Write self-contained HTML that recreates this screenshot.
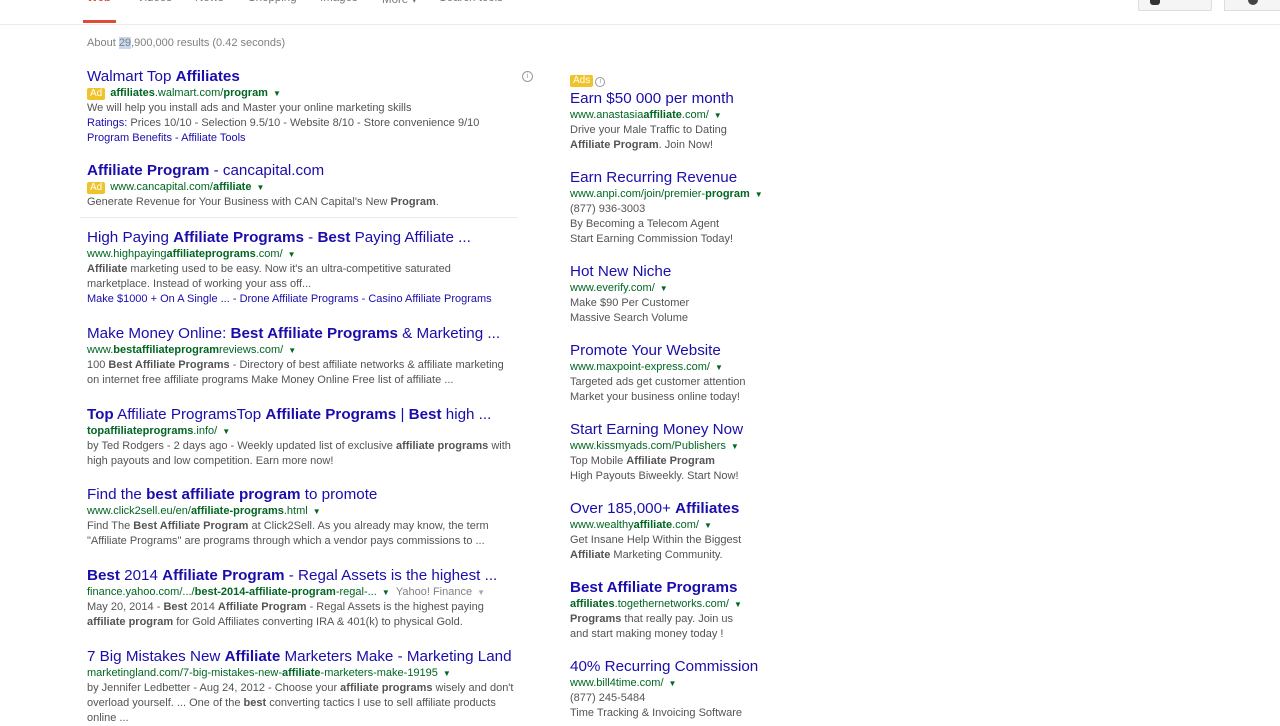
<!DOCTYPE html>
<html><head><meta charset="utf-8"><style>
body{margin:0;width:1280px;height:720px;overflow:hidden;background:#fff;font-family:"Liberation Sans",Arial,sans-serif;position:relative}
.a{position:absolute;white-space:nowrap}
.t{font-size:15.2px;color:#1a0dab;line-height:18px}
.u{font-size:11px;color:#006621;line-height:15px}
.s{font-size:11px;color:#545454;line-height:15px}
.l{color:#1a0dab}
.ad{display:inline-block;background:#f0c32a;color:#fff;font-size:10px;line-height:12px;padding:0 3px;border-radius:2px;margin-right:5px}
.ar{font-size:8px;color:#006621;margin-left:5px}
b{font-weight:bold}
.tab{position:absolute;top:-8px;font-size:11.5px;color:#777}
</style></head><body>
<div class="tab" style="left:87px;color:#dd4b39;font-weight:bold">Web</div>
<div class="tab" style="left:137px">Videos</div>
<div class="tab" style="left:195px">News</div>
<div class="tab" style="left:248px">Shopping</div>
<div class="tab" style="left:320px">Images</div>
<div class="tab" style="left:382px">More ▾</div>
<div class="tab" style="left:439px">Search tools</div>
<div class="a" style="left:83px;top:20px;width:33px;height:3px;background:#dd4b39"></div>
<div class="a" style="left:0;top:24px;width:1280px;height:1px;background:#ebebeb"></div>
<div class="a" style="left:1138px;top:0;width:72px;height:10px;border:1px solid #ddd;border-top:0;background:#f5f5f5;border-radius:0 0 2px 2px"></div>
<div class="a" style="left:1150px;top:0;width:10px;height:5px;background:#333;border-radius:0 0 3px 3px"></div>
<div class="a" style="left:1224px;top:0;width:60px;height:10px;border:1px solid #ddd;border-top:0;background:#f5f5f5"></div>
<div class="a" style="left:1248px;top:0;width:10px;height:5px;background:#444;border-radius:0 0 5px 5px"></div>

<div class="a s" style="left:87px;top:36px;color:#808080">About <span style="background:#c7d9f0">29</span>,900,000 results (0.42 seconds)</div>

<div class="a" style="left:87px;top:68px">
<div class="t">Walmart Top <b>Affiliates</b></div>
<div class="u"><span class="ad">Ad</span><b>affiliates</b>.walmart.com/<b>program</b><span class="ar">▼</span></div>
<div class="s">We will help you install ads and Master your online marketing skills</div>
<div class="s"><span class="l">Ratings:</span> Prices 10/10 - Selection 9.5/10 - Website 8/10 - Store convenience 9/10</div>
<div class="s l">Program Benefits - Affiliate Tools</div></div>
<div class="a" style="left:522px;top:71px;width:9px;height:9px;border:1px solid #999;border-radius:50%;font-size:7px;color:#999;text-align:center;line-height:9px">i</div>

<div class="a" style="left:87px;top:162px">
<div class="t"><b>Affiliate Program</b> - cancapital.com</div>
<div class="u"><span class="ad">Ad</span>www.cancapital.com/<b>affiliate</b><span class="ar">▼</span></div>
<div class="s">Generate Revenue for Your Business with CAN Capital's New <b>Program</b>.</div></div>
<div class="a" style="left:80px;top:217px;width:438px;height:1px;background:#ebebeb"></div>

<div class="a" style="left:87px;top:229px">
<div class="t">High Paying <b>Affiliate Programs</b> - <b>Best</b> Paying Affiliate ...</div>
<div class="u">www.highpaying<b>affiliateprograms</b>.com/<span class="ar">▼</span></div>
<div class="s"><b>Affiliate</b> marketing used to be easy. Now it's an ultra-competitive saturated</div>
<div class="s">marketplace. Instead of working your ass off...</div>
<div class="s l">Make $1000 + On A Single ... - Drone Affiliate Programs - Casino Affiliate Programs</div></div>

<div class="a" style="left:87px;top:325px">
<div class="t">Make Money Online: <b>Best Affiliate Programs</b> &amp; Marketing ...</div>
<div class="u">www.<b>bestaffiliateprogram</b>reviews.com/<span class="ar">▼</span></div>
<div class="s">100 <b>Best Affiliate Programs</b> - Directory of best affiliate networks &amp; affiliate marketing</div>
<div class="s">on internet free affiliate programs Make Money Online Free list of affiliate ...</div></div>

<div class="a" style="left:87px;top:406px">
<div class="t"><b>Top</b> Affiliate ProgramsTop <b>Affiliate Programs</b> | <b>Best</b> high ...</div>
<div class="u"><b>topaffiliateprograms</b>.info/<span class="ar">▼</span></div>
<div class="s">by Ted Rodgers - 2 days ago - Weekly updated list of exclusive <b>affiliate programs</b> with</div>
<div class="s">high payouts and low competition. Earn more now!</div></div>

<div class="a" style="left:87px;top:486px">
<div class="t">Find the <b>best affiliate program</b> to promote</div>
<div class="u">www.click2sell.eu/en/<b>affiliate-programs</b>.html<span class="ar">▼</span></div>
<div class="s">Find The <b>Best Affiliate Program</b> at Click2Sell. As you already may know, the term</div>
<div class="s">"Affiliate Programs" are programs through which a vendor pays commissions to ...</div></div>

<div class="a" style="left:87px;top:567px">
<div class="t"><b>Best</b> 2014 <b>Affiliate Program</b> - Regal Assets is the highest ...</div>
<div class="u">finance.yahoo.com/.../<b>best-2014-affiliate-program</b>-regal-...<span class="ar">▼</span> <span style="color:#808080">&nbsp;Yahoo! Finance</span><span class="ar" style="color:#aaa">▼</span></div>
<div class="s">May 20, 2014 - <b>Best</b> 2014 <b>Affiliate Program</b> - Regal Assets is the highest paying</div>
<div class="s"><b>affiliate program</b> for Gold Affiliates converting IRA &amp; 401(k) to physical Gold.</div></div>

<div class="a" style="left:87px;top:648px">
<div class="t">7 Big Mistakes New <b>Affiliate</b> Marketers Make - Marketing Land</div>
<div class="u">marketingland.com/7-big-mistakes-new-<b>affiliate</b>-marketers-make-19195<span class="ar">▼</span></div>
<div class="s">by Jennifer Ledbetter - Aug 24, 2012 - Choose your <b>affiliate programs</b> wisely and don't</div>
<div class="s">overload yourself. ... One of the <b>best</b> converting tactics I use to sell affiliate products</div>
<div class="s">online ...</div></div>

<div class="a" style="left:570px;top:70px"><span class="ad" style="margin-right:2px">Ads</span><span style="display:inline-block;width:8px;height:8px;border:1px solid #999;border-radius:50%;font-size:7px;line-height:8px;text-align:center;color:#999">i</span></div>

<div class="a" style="left:570px;top:90px">
<div class="t">Earn $50 000 per month</div>
<div class="u">www.anastasia<b>affiliate</b>.com/<span class="ar">▼</span></div>
<div class="s">Drive your Male Traffic to Dating</div>
<div class="s"><b>Affiliate Program</b>. Join Now!</div></div>

<div class="a" style="left:570px;top:169px">
<div class="t">Earn Recurring Revenue</div>
<div class="u">www.anpi.com/join/premier-<b>program</b><span class="ar">▼</span></div>
<div class="s">(877) 936-3003</div>
<div class="s">By Becoming a Telecom Agent</div>
<div class="s">Start Earning Commission Today!</div></div>

<div class="a" style="left:570px;top:263px">
<div class="t">Hot New Niche</div>
<div class="u">www.everify.com/<span class="ar">▼</span></div>
<div class="s">Make $90 Per Customer</div>
<div class="s">Massive Search Volume</div></div>

<div class="a" style="left:570px;top:342px">
<div class="t">Promote Your Website</div>
<div class="u">www.maxpoint-express.com/<span class="ar">▼</span></div>
<div class="s">Targeted ads get customer attention</div>
<div class="s">Market your business online today!</div></div>

<div class="a" style="left:570px;top:421px">
<div class="t">Start Earning Money Now</div>
<div class="u">www.kissmyads.com/Publishers<span class="ar">▼</span></div>
<div class="s">Top Mobile <b>Affiliate Program</b></div>
<div class="s">High Payouts Biweekly. Start Now!</div></div>

<div class="a" style="left:570px;top:500px">
<div class="t">Over 185,000+ <b>Affiliates</b></div>
<div class="u">www.wealthy<b>affiliate</b>.com/<span class="ar">▼</span></div>
<div class="s">Get Insane Help Within the Biggest</div>
<div class="s"><b>Affiliate</b> Marketing Community.</div></div>

<div class="a" style="left:570px;top:579px">
<div class="t"><b>Best Affiliate Programs</b></div>
<div class="u"><b>affiliates</b>.togethernetworks.com/<span class="ar">▼</span></div>
<div class="s"><b>Programs</b> that really pay. Join us</div>
<div class="s">and start making money today !</div></div>

<div class="a" style="left:570px;top:658px">
<div class="t">40% Recurring Commission</div>
<div class="u">www.bill4time.com/<span class="ar">▼</span></div>
<div class="s">(877) 245-5484</div>
<div class="s">Time Tracking &amp; Invoicing Software</div></div>
</body></html>
